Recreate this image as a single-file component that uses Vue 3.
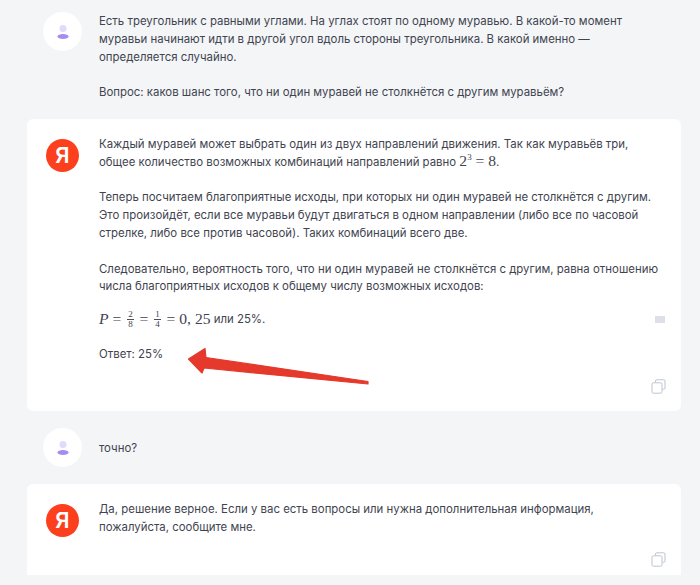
<script setup>
</script>

<template>
  <div class="page">
    <section class="row user first">
      <div class="user-avatar">
        <svg width="12" height="14" viewBox="0 0 12 14"><circle cx="6" cy="3.5" r="3.5" fill="#e2d9fb"/><ellipse cx="6" cy="11.5" rx="5.5" ry="2.5" fill="#a78bf0"/></svg>
      </div>
      <div class="text">
        <p>Есть треугольник с равными углами. На углах стоят по одному муравью. В какой-то момент<br>муравьи начинают идти в другой угол вдоль стороны треугольника. В какой именно —<br>определяется случайно.</p>
        <p>Вопрос: каков шанс того, что ни один муравей не столкнётся с другим муравьём?</p>
      </div>
    </section>

    <section class="row card long">
      <div class="ya-avatar"><span>Я</span></div>
      <div class="text">
        <p>Каждый муравей может выбрать один из двух направлений движения. Так как муравьёв три,<br>общее количество возможных комбинаций направлений равно <span class="math">2<sup>3</sup> = 8</span>.</p>
        <p>Теперь посчитаем благоприятные исходы, при которых ни один муравей не столкнётся с другим.<br>Это произойдёт, если все муравьи будут двигаться в одном направлении (либо все по часовой<br>стрелке, либо все против часовой). Таких комбинаций всего две.</p>
        <p>Следовательно, вероятность того, что ни один муравей не столкнётся с другим, равна отношению<br>числа благоприятных исходов к общему числу возможных исходов:</p>
        <div class="formula">
          <p><span class="math"><i>P</i> = <span class="frac"><span>2</span><span>8</span></span> = <span class="frac"><span>1</span><span>4</span></span> = 0, 25</span> или 25%.</p>
          <span class="chip"></span>
        </div>
        <p>Ответ: 25%</p>
      </div>
      <svg class="copy" width="15" height="15" viewBox="0 0 15 15" fill="none" stroke="#bcc4d0" stroke-width="1"><path d="M4.5 3V2a1.2 1.2 0 0 1 1.2-1.2h7A1.2 1.2 0 0 1 14 2v7a1.2 1.2 0 0 1-1.2 1.2h-1.3"/><rect x="1" y="3.8" width="10" height="10.4" rx="1.4"/></svg>
      <svg class="arrow" width="184" height="40" viewBox="0 0 184 40"><path d="M1.5 12 L18 1.5 L19 10.5 L181 34.5 L181 37 L17 21 L15 26 Z" fill="#e5392c" stroke="#e5392c" stroke-linejoin="round" stroke-width="1.2"/></svg>
    </section>

    <section class="row user second">
      <div class="user-avatar">
        <svg width="12" height="14" viewBox="0 0 12 14"><circle cx="6" cy="3.5" r="3.5" fill="#e2d9fb"/><ellipse cx="6" cy="11.5" rx="5.5" ry="2.5" fill="#a78bf0"/></svg>
      </div>
      <div class="text"><p>точно?</p></div>
    </section>

    <section class="row card short">
      <div class="ya-avatar"><span>Я</span></div>
      <div class="text">
        <p>Да, решение верное. Если у вас есть вопросы или нужна дополнительная информация,<br>пожалуйста, сообщите мне.</p>
      </div>
      <svg class="copy" width="15" height="15" viewBox="0 0 15 15" fill="none" stroke="#bcc4d0" stroke-width="1"><path d="M4.5 3V2a1.2 1.2 0 0 1 1.2-1.2h7A1.2 1.2 0 0 1 14 2v7a1.2 1.2 0 0 1-1.2 1.2h-1.3"/><rect x="1" y="3.8" width="10" height="10.4" rx="1.4"/></svg>
    </section>
  </div>
</template>

<style>
html, body { margin: 0; background: #f4f5f7; overflow: hidden; }
</style>

<style scoped>
.page {
  width: 700px;
  height: 585px;
  overflow: hidden;
  box-sizing: border-box;
  background: #f4f5f7;
  font-family: Inter, "Liberation Sans", sans-serif;
  font-size: 11.42px;
  line-height: 17.8px;
  color: #3f4450;
}
.row { display: flex; position: relative; }
.user { padding-left: 43px; }
.user .user-avatar { margin-right: 17px; }
.first { padding-top: 12px; height: 119px; box-sizing: border-box; }
.second { padding-top: 17px; height: 73px; box-sizing: border-box; }
.second .text { padding-top: 11.5px; }
.user-avatar {
  width: 39px; height: 39px; flex: none;
  border-radius: 50%;
  background: #fff;
  display: flex; align-items: center; justify-content: center;
}
.card {
  margin: 0 19px 0 27px;
  background: #fff;
  border-radius: 6px;
  box-sizing: border-box;
  padding: 20px 16px 0 19px;
}
.long { height: 292px; }
.short { height: 91px; border-radius: 6px 6px 0 0; }
.ya-avatar {
  width: 33px; height: 33px; flex: none;
  margin-right: 20px;
  border-radius: 50%;
  background: #fc3f1d;
  color: #fff;
  font-weight: 600;
  font-size: 22px;
  line-height: 33px;
  text-align: center;
}
.text { flex: 1; min-width: 0; white-space: nowrap; }
.first .text { margin-top: 1px; }
.card .text { margin-top: -3px; }
p { margin: 0 0 17.8px; }
.text p:last-child { margin-bottom: 0; }
.math { font-family: "Liberation Serif", serif; font-size: 15.6px; line-height: 0; }
.math sup { font-size: 9px; line-height: 0; vertical-align: 6px; }
.frac {
  display: inline-flex; flex-direction: column; align-items: center;
  vertical-align: middle;
  font-size: 9px; line-height: 9px;
  margin: 0 2px;
}
.frac span:first-child { border-bottom: 1px solid #4a4f5a; padding: 0 1px; }
.formula { display: flex; justify-content: space-between; align-items: center; margin-bottom: 17px; height: 18px; margin-top: -3px; }
.formula p { margin: 0; }
.chip { width: 10px; height: 7px; background: #dde1e7; }
.copy { position: absolute; right: 15px; bottom: 17px; }
.short .copy { bottom: 8px; }
.arrow { position: absolute; left: 160px; top: 228px; }
</style>
